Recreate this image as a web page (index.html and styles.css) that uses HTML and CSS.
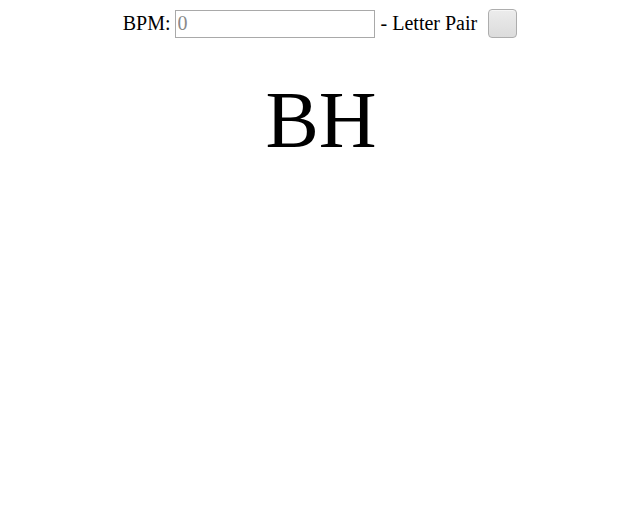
FILE: index.html
```html
<!DOCTYPE html>
<html>
<head>
<meta charset="utf-8">
<link rel="stylesheet" href="styles.css">
</head>
<body>
<div class="controls">
  <span class="label">BPM:</span>
  <input class="bpm" type="text" placeholder="0">
  <span class="label">- Letter Pair</span>
  <button class="go" type="button"></button>
</div>
<div class="pair">BH</div>
</body>
</html>
```
FILE: styles.css
```css
html, body {
  margin: 0;
  padding: 0;
  background: #fff;
}
body {
  font-family: "Liberation Serif", "Times New Roman", serif;
  color: #000;
  padding-top: 8px;
}
.controls {
  display: flex;
  justify-content: center;
  align-items: center;
  font-size: 20px;
  height: 30px;
  padding-right: 2px;
}
.label {
  line-height: 1;
}
.bpm {
  box-sizing: border-box;
  width: 200px;
  height: 28px;
  margin: 1px 6px 0 4px;
  padding: 1px 2px;
  border: 1px solid #a9a9a9;
  font-family: "Liberation Serif", "Times New Roman", serif;
  font-size: 20px;
  color: #000;
  outline: none;
}
.bpm::placeholder {
  color: #8a8a8a;
}
.go {
  box-sizing: border-box;
  width: 29px;
  height: 29px;
  margin-left: 11px;
  padding: 0;
  border: 1px solid #adadad;
  border-radius: 4px;
  background: linear-gradient(#ececec, #dcdcdc);
  box-shadow: inset 0 1px 0 #f6f6f6;
}
.pair {
  text-align: center;
  font-size: 80px;
  line-height: 92px;
  margin-top: 36px;
}
```
